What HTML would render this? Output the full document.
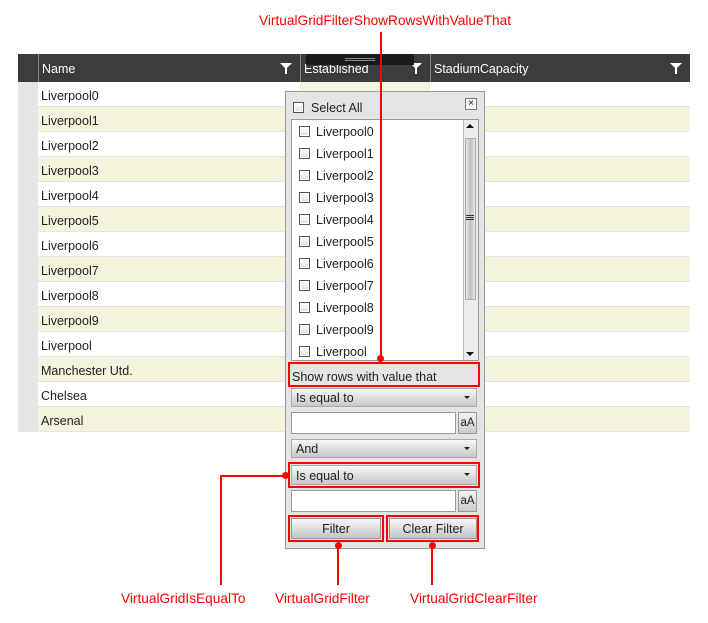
<!DOCTYPE html>
<html><head><style>
*{margin:0;padding:0;box-sizing:border-box}
body{width:708px;height:623px;background:#fff;position:relative;overflow:hidden;font-family:"Liberation Sans",sans-serif;font-size:12.5px;color:#222}
.a{position:absolute}
.row{position:absolute;left:18px;width:672px;height:25px;border-bottom:1px solid #e4e4e4}
.row .ind{position:absolute;left:0;top:0;width:20px;height:25px;background:#e5e5e5}
.row span{position:absolute;left:23px;top:7px}
.hd{position:absolute;top:54px;height:28px;background:#3c3c3c;color:#fff;border-left:1px solid #888;padding:8px 0 0 3px}
.fi{position:absolute;right:8px;top:9px;width:0;height:0;border-left:6px solid transparent;border-right:6px solid transparent;border-top:6px solid #fff}
.fi:after{content:"";position:absolute;left:-1px;top:-1px;width:2px;height:6px;background:#fff}
.cb{position:absolute;width:11px;height:11px;border:1px solid #555;background:linear-gradient(#fff,#ddd);box-shadow:inset 0 0 0 1px #fff}
.it{position:absolute;left:299px;height:22px}
.it .cb{left:0;top:0}
.it span{position:absolute;left:17px;top:-1px;white-space:nowrap}
.dd{position:absolute;left:291px;width:186px;height:19px;border:1px solid #aaa;background:linear-gradient(#f6f6f6,#c8c8c8);padding:2px 0 0 4px}
.dd:after{content:"";position:absolute;right:6px;top:7px;border-left:3px solid transparent;border-right:3px solid transparent;border-top:3px solid #222}
.tb{position:absolute;left:291px;width:165px;height:22px;border:1px solid #999;background:#fff}
.aa{position:absolute;left:458px;width:19px;height:22px;border:1px solid #999;background:linear-gradient(#f2f2f2,#ccc);font-size:11.5px;text-align:center;padding-top:4px}
.btn{position:absolute;top:518px;height:21px;border:1px solid #999;background:linear-gradient(#f6f6f6,#c4c4c4);text-align:center;padding-top:3px}
.red{position:absolute;border:2px solid #f00}
.rl{position:absolute;background:#f00}
.dot{position:absolute;width:7px;height:7px;border-radius:50%;background:#f00}
.lbl{position:absolute;color:#f00;font-size:13.7px;white-space:nowrap}
</style></head><body>
<div class="a" style="left:18px;top:54px;width:672px;height:28px;background:#3c3c3c"></div>
<div class="hd" style="left:38px;width:262px">Name<i class="fi"></i></div>
<div class="hd" style="left:300px;width:130px">Established<i class="fi"></i></div>
<div class="hd" style="left:430px;width:260px">StadiumCapacity<i class="fi"></i></div>
<div class="a" style="left:306px;top:54px;width:108px;height:11px;background:#1a1a1a"></div>
<div class="a" style="left:345px;top:58px;width:30px;height:3px;border-top:1px solid #888;border-bottom:1px solid #888"></div>

<div class="row" style="top:82px;background:#fff"><div class="ind"></div><span>Liverpool0</span></div>
<div class="row" style="top:107px;background:#f4f3dd"><div class="ind"></div><span>Liverpool1</span></div>
<div class="row" style="top:132px;background:#fff"><div class="ind"></div><span>Liverpool2</span></div>
<div class="row" style="top:157px;background:#f4f3dd"><div class="ind"></div><span>Liverpool3</span></div>
<div class="row" style="top:182px;background:#fff"><div class="ind"></div><span>Liverpool4</span></div>
<div class="row" style="top:207px;background:#f4f3dd"><div class="ind"></div><span>Liverpool5</span></div>
<div class="row" style="top:232px;background:#fff"><div class="ind"></div><span>Liverpool6</span></div>
<div class="row" style="top:257px;background:#f4f3dd"><div class="ind"></div><span>Liverpool7</span></div>
<div class="row" style="top:282px;background:#fff"><div class="ind"></div><span>Liverpool8</span></div>
<div class="row" style="top:307px;background:#f4f3dd"><div class="ind"></div><span>Liverpool9</span></div>
<div class="row" style="top:332px;background:#fff"><div class="ind"></div><span>Liverpool</span></div>
<div class="row" style="top:357px;background:#f4f3dd"><div class="ind"></div><span>Manchester Utd.</span></div>
<div class="row" style="top:382px;background:#fff"><div class="ind"></div><span>Chelsea</span></div>
<div class="row" style="top:407px;background:#f4f3dd"><div class="ind"></div><span>Arsenal</span></div>
<div class="a" style="left:300px;top:82px;width:130px;height:10px;background:#f4f3dd"></div>

<!-- popup -->
<div class="a" style="left:285px;top:91px;width:200px;height:458px;background:#e4e4e4;border:1px solid #999"></div>
<div class="cb" style="left:293px;top:102px"></div>
<div class="a" style="left:311px;top:101px">Select All</div>
<div class="a" style="left:465px;top:98px;width:12px;height:12px;border:1px solid #777;background:#f4f4f4;font-size:10px;line-height:9px;text-align:center">×</div>
<div class="a" style="left:291px;top:119px;width:188px;height:242px;background:#fff;border:1px solid #999"></div>
<div class="a" style="left:463px;top:120px;width:15px;height:240px;background:#ececec;border-left:1px solid #bbb"></div>
<div class="a" style="left:466px;top:124px;border-left:4px solid transparent;border-right:4px solid transparent;border-bottom:4px solid #111"></div>
<div class="a" style="left:466px;top:352px;border-left:4px solid transparent;border-right:4px solid transparent;border-top:4px solid #111"></div>
<div class="a" style="left:465px;top:138px;width:11px;height:162px;border:1px solid #aaa;background:linear-gradient(90deg,#e8e8e8,#c0c0c0,#e8e8e8)"></div>
<div class="a" style="left:466px;top:215px;width:8px;height:5px;border-top:1px solid #333;border-bottom:1px solid #333"></div>
<div class="a" style="left:466px;top:217px;width:8px;height:1px;background:#333"></div>

<div class="it" style="top:126px"><div class="cb"></div><span>Liverpool0</span></div>
<div class="it" style="top:148px"><div class="cb"></div><span>Liverpool1</span></div>
<div class="it" style="top:170px"><div class="cb"></div><span>Liverpool2</span></div>
<div class="it" style="top:192px"><div class="cb"></div><span>Liverpool3</span></div>
<div class="it" style="top:214px"><div class="cb"></div><span>Liverpool4</span></div>
<div class="it" style="top:236px"><div class="cb"></div><span>Liverpool5</span></div>
<div class="it" style="top:258px"><div class="cb"></div><span>Liverpool6</span></div>
<div class="it" style="top:280px"><div class="cb"></div><span>Liverpool7</span></div>
<div class="it" style="top:302px"><div class="cb"></div><span>Liverpool8</span></div>
<div class="it" style="top:324px"><div class="cb"></div><span>Liverpool9</span></div>
<div class="it" style="top:346px"><div class="cb"></div><span>Liverpool</span></div>

<div class="a" style="left:292px;top:370px">Show rows with value that</div>
<div class="dd" style="top:388px">Is equal to</div>
<div class="tb" style="top:412px"></div><div class="aa" style="top:412px">aA</div>
<div class="dd" style="top:439px">And</div>
<div class="dd" style="top:465px;height:20px;padding-top:3px">Is equal to</div>
<div class="tb" style="top:490px"></div><div class="aa" style="top:490px">aA</div>
<div class="btn" style="left:291px;width:90px">Filter</div>
<div class="btn" style="left:389px;width:88px">Clear Filter</div>

<!-- annotations -->
<div class="red" style="left:288px;top:362px;width:192px;height:25px"></div>
<div class="red" style="left:288px;top:462px;width:192px;height:26px"></div>
<div class="red" style="left:288px;top:515px;width:96px;height:27px"></div>
<div class="red" style="left:386px;top:515px;width:93px;height:27px"></div>
<div class="lbl" style="left:259px;top:13px">VirtualGridFilterShowRowsWithValueThat</div>
<div class="rl" style="left:380px;top:32px;width:2px;height:326px"></div>
<div class="dot" style="left:377px;top:355px"></div>
<div class="dot" style="left:282px;top:472px"></div>
<div class="rl" style="left:220px;top:475px;width:64px;height:2px"></div>
<div class="rl" style="left:220px;top:475px;width:2px;height:110px"></div>
<div class="dot" style="left:335px;top:542px"></div>
<div class="rl" style="left:337px;top:545px;width:2px;height:40px"></div>
<div class="dot" style="left:429px;top:542px"></div>
<div class="rl" style="left:431px;top:545px;width:2px;height:40px"></div>
<div class="lbl" style="left:121px;top:591px">VirtualGridIsEqualTo</div>
<div class="lbl" style="left:275px;top:591px">VirtualGridFilter</div>
<div class="lbl" style="left:410px;top:591px">VirtualGridClearFilter</div>
</body></html>
